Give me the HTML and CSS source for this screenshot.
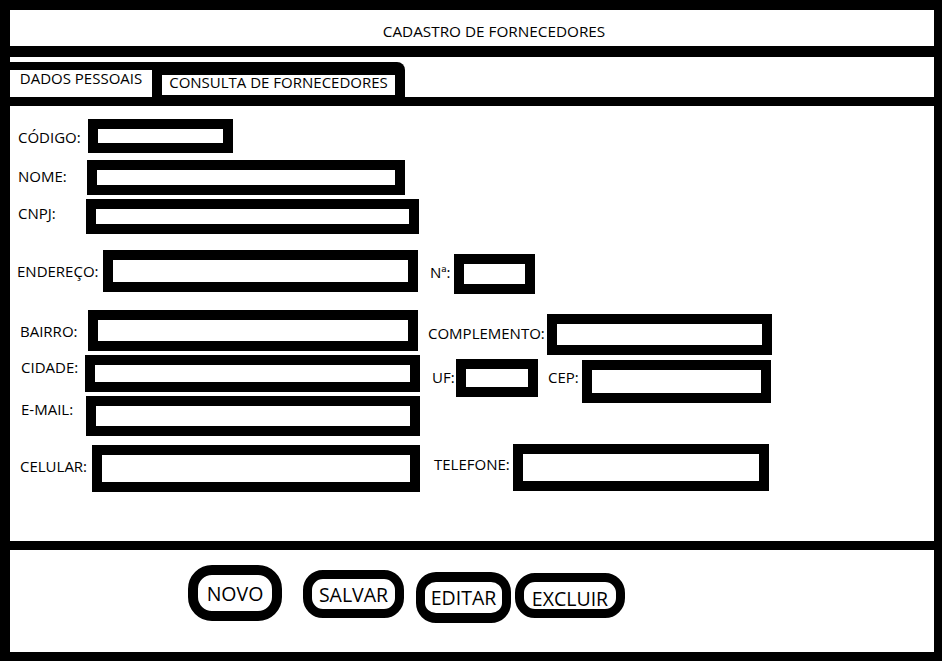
FILE: index.html
```html
<!DOCTYPE html>
<html lang="pt-BR">
<head>
    <meta charset="UTF-8">
    <meta name="viewport" content="width=device-width, initial-scale=1.0">
    <title>Cadastro de Fornecedores</title>
    <link rel="stylesheet" href="styles.css">
</head>
<body>
    <header class="title-bar">CADASTRO DE FORNECEDORES</header>

    <nav class="tab-band">
        <div class="tabs">
            <div class="tab tab-active">DADOS PESSOAIS</div>
            <div class="tab tab-other">CONSULTA DE FORNECEDORES</div>
        </div>
    </nav>

    <main class="form-panel">
        <div class="row row-codigo">
            <label class="lbl lbl-codigo">CÓDIGO:</label>
            <span class="box box-codigo"></span>
        </div>
        <div class="row row-nome">
            <label class="lbl lbl-nome">NOME:</label>
            <span class="box box-nome"></span>
        </div>
        <div class="row row-cnpj">
            <label class="lbl lbl-cnpj">CNPJ:</label>
            <span class="box box-cnpj"></span>
        </div>
        <div class="row row-endereco">
            <label class="lbl lbl-endereco">ENDEREÇO:</label>
            <span class="box box-endereco"></span>
            <label class="lbl lbl-numero">Nª:</label>
            <span class="box box-numero"></span>
        </div>
        <div class="row row-bairro">
            <label class="lbl lbl-bairro">BAIRRO:</label>
            <span class="box box-bairro"></span>
            <label class="lbl lbl-complemento">COMPLEMENTO:</label>
            <span class="box box-complemento"></span>
        </div>
        <div class="row row-cidade">
            <label class="lbl lbl-cidade">CIDADE:</label>
            <span class="box box-cidade"></span>
            <label class="lbl lbl-uf">UF:</label>
            <span class="box box-uf"></span>
            <label class="lbl lbl-cep">CEP:</label>
            <span class="box box-cep"></span>
        </div>
        <div class="row row-email">
            <label class="lbl lbl-email">E-MAIL:</label>
            <span class="box box-email"></span>
        </div>
        <div class="row row-celular">
            <label class="lbl lbl-celular">CELULAR:</label>
            <span class="box box-celular"></span>
            <label class="lbl lbl-telefone">TELEFONE:</label>
            <span class="box box-telefone"></span>
        </div>
    </main>

    <footer class="actions">
        <button class="btn btn-novo">NOVO</button>
        <button class="btn btn-salvar">SALVAR</button>
        <button class="btn btn-editar">EDITAR</button>
        <button class="btn btn-excluir">EXCLUIR</button>
    </footer>
</body>
</html>
```

FILE: styles.css
```css
* {
    margin: 0;
    padding: 0;
    box-sizing: border-box;
}

body {
    font-family: "Open Sans", "Noto Sans", sans-serif;
    font-size: 15px;
    color: #000;
    background: #000;
    padding: 10px 8px 9px 10px;
    height: 661px;
    overflow: hidden;
}

/* title */
.title-bar {
    background: #fff;
    height: 36px;
    padding: 11px 0 0 44px;
    font-size: 15.3px;
    line-height: 20px;
    text-align: center;
}

/* tabs */
.tab-band {
    background: #fff;
    height: 40px;
    margin-top: 11px;
    padding-top: 5px;
}

.tabs {
    display: flex;
    width: 395px;
    height: 35px;
    background: #000;
    border-top-right-radius: 8px;
}

.tab {
    background: #fff;
    white-space: nowrap;
    text-align: center;
}

.tab-active {
    width: 142px;
    height: 27px;
    margin-top: 8px;
    line-height: 16px;
}

.tab-other {
    width: 233px;
    height: 20px;
    margin: 13px 0 0 10px;
    line-height: 14px;
}

/* form */
.form-panel {
    background: #fff;
    height: 435px;
    margin-top: 9px;
    padding-top: 1px;
}

.row {
    display: flex;
    align-items: flex-start;
}

.row-codigo { margin-top: 12px; height: 34px; }
.row-nome { margin-top: 7px; height: 35px; }
.row-cnpj { margin-top: 4px; height: 35px; }
.row-endereco { margin-top: 16px; height: 42px; }
.row-bairro { margin-top: 18px; height: 41px; }
.row-cidade { margin-top: 4px; height: 37px; }
.row-email { margin-top: 4px; height: 40px; }
.row-celular { margin-top: 8px; height: 48px; }

.lbl {
    flex: none;
    line-height: 20px;
    white-space: nowrap;
}

.lbl-codigo { margin: 8px 0 0 8px; width: 70px; }
.lbl-nome { margin: 6px 0 0 8px; width: 69px; }
.lbl-cnpj { margin: 4px 0 0 8px; width: 68px; }
.lbl-endereco { margin: 11px 0 0 7px; width: 86px; }
.lbl-numero { margin: 12px 0 0 12px; width: 24px; }
.lbl-bairro { margin: 11px 0 0 10px; width: 68px; }
.lbl-complemento { margin: 13px 0 0 10px; width: 119px; }
.lbl-cidade { margin: 2px 0 0 11px; width: 64px; }
.lbl-uf { margin: 12px 0 0 12px; width: 24px; }
.lbl-cep { margin: 12px 0 0 10px; width: 34px; }
.lbl-email { margin: 3px 0 0 11px; width: 65px; }
.lbl-celular { margin: 12px 0 0 10px; width: 72px; }
.lbl-telefone { margin: 10px 0 0 14px; width: 79px; }

.box {
    display: block;
    flex: none;
    background: #fff;
    border: 10px solid #000;
}

.box-codigo { width: 145px; height: 34px; }
.box-nome { width: 318px; height: 35px; }
.box-cnpj { width: 333px; height: 35px; }
.box-endereco { width: 315px; height: 42px; }
.box-numero { width: 81px; height: 40px; margin-top: 4px; }
.box-bairro { width: 330px; height: 41px; }
.box-complemento { width: 225px; height: 41px; margin-top: 4px; }
.box-cidade { width: 335px; height: 37px; }
.box-uf { width: 82px; height: 38px; margin-top: 4px; }
.box-cep { width: 189px; height: 43px; margin-top: 5px; }
.box-email { width: 334px; height: 40px; }
.box-celular { width: 328px; height: 47px; margin-top: 1px; }
.box-telefone { width: 256px; height: 47px; }

/* buttons */
.actions {
    display: flex;
    align-items: flex-start;
    background: #fff;
    height: 102px;
    margin-top: 9px;
}

.btn {
    flex: none;
    font-family: inherit;
    font-size: 19.5px;
    color: #000;
    background: #fff;
    border: 9px solid #000;
    border-radius: 20px;
    cursor: pointer;
}

.btn-novo { margin: 15px 0 0 178px; width: 94px; height: 56px; border-width: 10px; border-radius: 24px; }
.btn-salvar { margin: 20px 0 0 21px; width: 101px; height: 48px; }
.btn-editar { margin: 22px 0 0 12px; width: 95px; height: 51px; border-width: 10px 9px; }
.btn-excluir { margin: 23px 0 0 4px; width: 110px; height: 45px; padding-top: 3px; }
```
